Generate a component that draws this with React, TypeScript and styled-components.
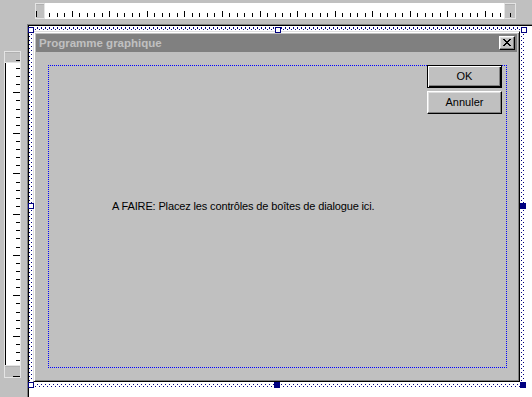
import React from 'react';
import styled, { createGlobalStyle, css } from 'styled-components';

const Global = createGlobalStyle`
  html, body { margin: 0; padding: 0; background: #c0c0c0; }
  body { width: 532px; height: 397px; overflow: hidden; font-family: "Liberation Sans", Arial, sans-serif; }
`;

const Workspace = styled.div`
  display: grid;
  grid-template-columns: 27px 1fr;
  grid-template-rows: 24px 1fr;
  width: 532px;
  height: 397px;
  background: #c0c0c0;
  overflow: hidden;
`;

const TopBar = styled.div`
  grid-column: 1 / -1;
  padding: 3px 0 0 35px;
`;

const HRuler = styled.div`
  position: relative;
  display: flex;
  width: 481px;
  height: 16px;
  background: #fff;
`;

const HTrack = styled.div`
  flex: 1;
`;

const Thumb = styled.div<{ $w?: number; $h?: number }>`
  box-sizing: border-box;
  width: ${p => (p.$w ? `${p.$w}px` : '100%')};
  height: ${p => (p.$h ? `${p.$h}px` : '100%')};
  flex: none;
  background: #c0c0c0;
  border: 1px solid #e4e4e4;
  box-shadow: inset 0 1px 0 #b0b0b0;
`;

const TickLayer = styled.svg`
  position: absolute;
  left: 0;
  top: 0;
  pointer-events: none;
`;

const LeftColumn = styled.div`
  padding: 27px 0 0 4px;
`;

const VRuler = styled.div`
  position: relative;
  display: flex;
  flex-direction: column;
  width: 17px;
  height: 327px;
`;

const VTrack = styled.div`
  flex: 1;
  background: #fff;
  border-left: 1px solid #000;
  box-shadow: -1px 0 0 #e4e4e4, inset -1px 0 0 #e4e4e4;
  margin-left: 1px;
`;

const Canvas = styled.div`
  background: #fff;
  border-top: 1px solid #808080;
  border-left: 1px solid #808080;
  box-shadow: inset 1px 1px 0 #000;
  padding: 2px 0 0 1px;
  overflow: hidden;
`;

const dots = css`
  content: '';
  position: absolute;
  inset: 0;
  background-image: repeating-linear-gradient(90deg, #000080 0 1px, transparent 1px 4px);
  -webkit-mask-image: repeating-linear-gradient(180deg, #000 0 1px, transparent 1px 4px);
  mask-image: repeating-linear-gradient(180deg, #000 0 1px, transparent 1px 4px);
`;

const Selection = styled.div`
  position: relative;
  width: max-content;
  padding: 3px 4px 5px 3px;
  &::before {
    ${dots}
    background-position: 0 0;
    -webkit-mask-position: 0 1px;
    mask-position: 0 1px;
  }
  &::after {
    ${dots}
    background-position: 2px 0;
    -webkit-mask-position: 0 3px;
    mask-position: 0 3px;
  }
`;

const Slot = styled.div`
  position: relative;
  z-index: 1;
  background: #fff;
  padding: 1px;
`;

const Handle = styled.span<{ $filled?: boolean; $left: number; $top: number }>`
  position: absolute;
  z-index: 2;
  left: ${p => p.$left}px;
  top: ${p => p.$top}px;
  width: 6px;
  height: 6px;
  box-sizing: border-box;
  border: 1px solid #000080;
  background: ${p => (p.$filled ? '#000080' : '#fff')};
`;

const Dialog = styled.div`
  box-sizing: border-box;
  width: 487px;
  height: 351px;
  background: #c0c0c0;
  border: 1px solid;
  border-color: #dfdfdf #000 #000 #dfdfdf;
  box-shadow: inset 1px 1px 0 #fff, inset -1px -1px 0 #808080;
  padding: 2px;
  display: flex;
  flex-direction: column;
`;

const TitleBar = styled.div`
  height: 18px;
  flex: none;
  background: #808080;
  display: flex;
  align-items: center;
  justify-content: space-between;
  padding: 0 2px 0 3px;
`;

const TitleText = styled.span`
  color: #c0c0c0;
  font-weight: bold;
  font-size: 11.5px;
  line-height: 14px;
  white-space: nowrap;
`;

const CloseButton = styled.div`
  box-sizing: border-box;
  width: 16px;
  height: 14px;
  background: #c0c0c0;
  border: 1px solid;
  border-color: #fff #000 #000 #fff;
  box-shadow: inset -1px -1px 0 #808080, inset 1px 1px 0 #dfdfdf;
  display: flex;
  align-items: center;
  justify-content: center;
  padding: 0 1px 1px 0;
`;

const Client = styled.div`
  position: relative;
  flex: 1;
`;

const GuideRect = styled.div`
  box-sizing: border-box;
  margin: 13px 0 0 12px;
  width: 459px;
  height: 303px;
  border: 1px dotted #0000ff;
`;

const PushButton = styled.div<{ $top: number; $default?: boolean }>`
  position: absolute;
  left: 391px;
  top: ${p => p.$top}px;
  box-sizing: border-box;
  width: 75px;
  height: 23px;
  background: #c0c0c0;
  color: #000;
  font-size: 11px;
  line-height: 13px;
  display: flex;
  align-items: center;
  justify-content: center;
  border: 1px solid;
  border-color: #fff #000 #000 #fff;
  box-shadow: inset -1px -1px 0 #808080, inset 1px 1px 0 #dfdfdf;
  ${p =>
    p.$default &&
    css`
      border-color: #000;
      box-shadow: inset 1px 1px 0 #fff, inset -1px -1px 0 #000, inset -2px -2px 0 #808080;
    `}
`;

const StaticText = styled.div`
  position: absolute;
  left: 76px;
  top: 148px;
  font-size: 11px;
  letter-spacing: -0.14px;
  line-height: 13px;
  color: #000;
  white-space: nowrap;
`;

const X_PIXELS = [
  'xx....xx',
  '.xx..xx.',
  '..xxxx..',
  '...xx...',
  '..xxxx..',
  '.xx..xx.',
  'xx....xx',
];

function CloseGlyph() {
  const rects: React.ReactElement[] = [];
  X_PIXELS.forEach((row, y) =>
    row.split('').forEach((c, x) => {
      if (c === 'x') rects.push(<rect key={`${x}-${y}`} x={x} y={y} width={1} height={1} />);
    })
  );
  return (
    <svg width={8} height={7} viewBox="0 0 8 7" shapeRendering="crispEdges" fill="#000">
      {rects}
    </svg>
  );
}

function HTicks() {
  const ticks: { x: number; long: boolean }[] = [];
  for (let i = 0; i < 70; i++) {
    const abs = 34.1 + 7.514 * i;
    if (abs >= 46 && abs <= 502) ticks.push({ x: Math.round(abs - 35), long: i % 5 === 0 });
  }
  ticks.push({ x: 1, long: true });
  ticks.push({ x: 475, long: false });
  return (
    <TickLayer width={481} height={16} shapeRendering="crispEdges" fill="#000">
      {ticks.map(t => (
        <rect key={t.x} x={t.x} y={t.long ? 8 : 10} width={1} height={t.long ? 6 : 4} />
      ))}
    </TickLayer>
  );
}

function VTicks() {
  const ticks: { y: number; long: boolean }[] = [];
  for (let i = 0; i < 40; i++) {
    const abs = 59.8 + 8.12 * i;
    if (i === 0 || i === 39 || (abs >= 63 && abs <= 363)) {
      ticks.push({ y: Math.round(abs - 51), long: (i + 1) % 5 === 0 });
    }
  }
  return (
    <TickLayer width={17} height={327} shapeRendering="crispEdges" fill="#000">
      {ticks.map(t => (
        <rect key={t.y} x={t.long ? 9 : 12} y={t.y} width={t.long ? 7 : 4} height={1} />
      ))}
    </TickLayer>
  );
}

const HANDLES: { left: number; top: number; filled?: boolean }[] = [
  { left: -1, top: 0 },
  { left: 246, top: 0 },
  { left: 492, top: 0 },
  { left: -1, top: 176 },
  { left: 491, top: 176, filled: true },
  { left: -1, top: 355 },
  { left: 245, top: 355, filled: true },
  { left: 491, top: 355, filled: true },
];

export default function App() {
  return (
    <>
      <Global />
      <Workspace>
        <TopBar>
          <HRuler>
            <Thumb $w={10} />
            <HTrack />
            <Thumb $w={12} />
            <HTicks />
          </HRuler>
        </TopBar>
        <LeftColumn>
          <VRuler>
            <Thumb $h={12} />
            <VTrack />
            <Thumb $h={13} />
            <VTicks />
          </VRuler>
        </LeftColumn>
        <Canvas>
          <Selection>
            {HANDLES.map((h, i) => (
              <Handle key={i} $left={h.left} $top={h.top} $filled={h.filled} />
            ))}
            <Slot>
              <Dialog>
                <TitleBar>
                  <TitleText>Programme graphique</TitleText>
                  <CloseButton>
                    <CloseGlyph />
                  </CloseButton>
                </TitleBar>
                <Client>
                  <GuideRect />
                  <PushButton $top={13} $default>OK</PushButton>
                  <PushButton $top={39}>Annuler</PushButton>
                  <StaticText>A FAIRE: Placez les contrôles de boîtes de dialogue ici.</StaticText>
                </Client>
              </Dialog>
            </Slot>
          </Selection>
        </Canvas>
      </Workspace>
    </>
  );
}
